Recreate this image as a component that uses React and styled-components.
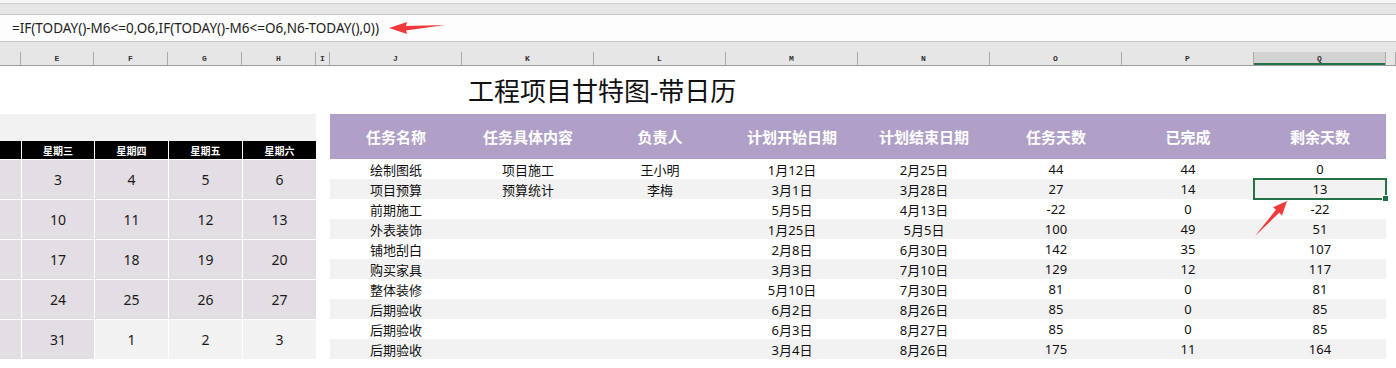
import styled, { createGlobalStyle } from 'styled-components'

const GlobalStyle = createGlobalStyle`
  html, body {
    margin: 0;
    padding: 0;
    background: #ffffff;
  }
  body {
    font-family: "Noto Sans", "Noto Sans CJK SC", sans-serif;
  }
`

const Page = styled.div`
  width: 1396px;
  height: 368px;
  overflow: hidden;
  background: #ffffff;
  display: flex;
  flex-direction: column;
`

const TopStrip = styled.div`
  height: 3px;
  background: #f6f6f6;
  border-bottom: 1px solid #cfcfcf;
`

const GreyBand = styled.div`
  height: ${p => p.h}px;
  background: #e6e6e6;
`

const FormulaBar = styled.div`
  height: 26px;
  background: #fdfdfd;
  border-top: 1px solid #c6c6c6;
  border-bottom: 1px solid #c6c6c6;
  display: flex;
  align-items: center;
  padding-left: 12px;
  gap: 9px;
`

const Formula = styled.span`
  font-size: 13.5px;
  color: #222;
  white-space: nowrap;
`

const ColHeaderRow = styled.div`
  height: 13px;
  display: flex;
  background: #e6e6e6;
  border-bottom: 1px solid #9d9d9d;
`

const ColHead = styled.div`
  flex: 0 0 ${p => p.w}px;
  box-sizing: border-box;
  border-right: 1px solid #ababab;
  display: flex;
  align-items: center;
  justify-content: center;
  font-family: "Liberation Mono", monospace;
  font-size: 8px;
  font-weight: bold;
  color: #333;
  background: ${p => (p.active ? '#d2d2d2' : 'transparent')};
  box-shadow: ${p => (p.active ? 'inset 0 -2px 0 #217346' : 'none')};
`

const Sheet = styled.div`
  flex: 1;
  display: flex;
  align-items: flex-start;
`

const Calendar = styled.div`
  width: 316px;
  flex: 0 0 316px;
  overflow: hidden;
  display: flex;
  flex-direction: column;
  padding-top: 48px;
`

const CalTitle = styled.div`
  height: 27px;
  background: #f2f2f2;
`

const CalGrid = styled.div`
  margin-left: -52px;
  display: grid;
  grid-template-columns: 73px 72px 73px 73px 73px;
  grid-template-rows: 18px repeat(5, 39px);
  row-gap: 1px;
  column-gap: 1px;
  background: #ffffff;
`

const WeekDay = styled.div`
  background: #000000;
  color: #ffffff;
  font-size: 10px;
  font-weight: bold;
  display: flex;
  align-items: center;
  justify-content: center;
`

const Day = styled.div`
  background: ${p => (p.other ? '#f2f2f2' : '#e3dde4')};
  color: #1a1a1a;
  font-size: 14px;
  display: flex;
  align-items: center;
  justify-content: center;
`

const Spacer = styled.div`
  flex: 0 0 14px;
`

const Project = styled.div`
  position: relative;
  flex: 0 0 1056px;
  display: flex;
  flex-direction: column;
`

const Title = styled.h1`
  margin: 0;
  height: 48px;
  padding-left: 138px;
  display: flex;
  align-items: center;
  font-size: 26px;
  font-weight: normal;
  color: #111;
`

const Table = styled.div`
  display: grid;
  grid-template-columns: repeat(8, 132px);
`

const Th = styled.div`
  height: 45px;
  background: #b0a0c8;
  color: #ffffff;
  font-size: 15px;
  font-weight: bold;
  display: flex;
  align-items: center;
  justify-content: center;
`

const Td = styled.div`
  position: relative;
  height: 20px;
  background: ${p => (p.odd ? '#f2f2f2' : '#ffffff')};
  color: #111;
  font-size: 13px;
  display: flex;
  align-items: center;
  justify-content: center;
  outline: ${p => (p.selected ? '2px solid #217346' : 'none')};
  outline-offset: -1px;
  z-index: ${p => (p.selected ? 1 : 0)};

  ${p => p.selected && `
    &::after {
      content: '';
      position: absolute;
      right: -3px;
      bottom: -3px;
      width: 5px;
      height: 5px;
      background: #217346;
      border: 1px solid #ffffff;
    }
  `}
`

const PointerArrow = styled.svg`
  position: absolute;
  left: 922px;
  top: 133px;
  z-index: 2;
`

const columns = [
  { name: '', w: 21 },
  { name: 'E', w: 73 },
  { name: 'F', w: 74 },
  { name: 'G', w: 74 },
  { name: 'H', w: 74 },
  { name: 'I', w: 14 },
  { name: 'J', w: 132 },
  { name: 'K', w: 132 },
  { name: 'L', w: 132 },
  { name: 'M', w: 132 },
  { name: 'N', w: 132 },
  { name: 'O', w: 132 },
  { name: 'P', w: 132 },
  { name: 'Q', w: 132, active: true },
  { name: '', w: 10 },
]

// the first column (星期二) is scrolled out of view, only its edge shows
const weekDays = ['', '星期三', '星期四', '星期五', '星期六']

const weeks = [
  ['', 3, 4, 5, 6],
  ['', 10, 11, 12, 13],
  ['', 17, 18, 19, 20],
  ['', 24, 25, 26, 27],
  ['', 31, 1, 2, 3],
]

const headers = ['任务名称', '任务具体内容', '负责人', '计划开始日期', '计划结束日期', '任务天数', '已完成', '剩余天数']

const tasks = [
  ['绘制图纸', '项目施工', '王小明', '1月12日', '2月25日', 44, 44, 0],
  ['项目预算', '预算统计', '李梅', '3月1日', '3月28日', 27, 14, 13],
  ['前期施工', '', '', '5月5日', '4月13日', -22, 0, -22],
  ['外表装饰', '', '', '1月25日', '5月5日', 100, 49, 51],
  ['铺地刮白', '', '', '2月8日', '6月30日', 142, 35, 107],
  ['购买家具', '', '', '3月3日', '7月10日', 129, 12, 117],
  ['整体装修', '', '', '5月10日', '7月30日', 81, 0, 81],
  ['后期验收', '', '', '6月2日', '8月26日', 85, 0, 85],
  ['后期验收', '', '', '6月3日', '8月27日', 85, 0, 85],
  ['后期验收', '', '', '3月4日', '8月26日', 175, 11, 164],
]

function LeftArrow() {
  return (
    <svg width="58" height="14" viewBox="0 0 58 14">
      <polygon points="1,7 19,1 18,5 57,4 18,9.5 19,13" fill="#f0393a" />
    </svg>
  )
}

function App() {
  return (
    <Page>
      <GlobalStyle />
      <TopStrip />
      <GreyBand h={10} />
      <FormulaBar>
        <Formula>=IF(TODAY()-M6&lt;=0,O6,IF(TODAY()-M6&lt;=O6,N6-TODAY(),0))</Formula>
        <LeftArrow />
      </FormulaBar>
      <GreyBand h={10} />
      <ColHeaderRow>
        {columns.map((c, i) => (
          <ColHead key={i} w={c.w} active={c.active}>{c.name}</ColHead>
        ))}
      </ColHeaderRow>
      <Sheet>
        <Calendar>
          <CalTitle />
          <CalGrid>
            {weekDays.map((d, i) => <WeekDay key={i}>{d}</WeekDay>)}
            {weeks.map((week, r) =>
              week.map((n, c) => (
                <Day key={`${r}-${c}`} other={r === 4 && c > 1}>{n}</Day>
              ))
            )}
          </CalGrid>
        </Calendar>
        <Spacer />
        <Project>
          <Title>工程项目甘特图-带日历</Title>
          <Table>
            {headers.map(h => <Th key={h}>{h}</Th>)}
            {tasks.map((row, r) =>
              row.map((v, c) => (
                <Td key={`${r}-${c}`} odd={r % 2 === 1} selected={r === 1 && c === 7}>{v}</Td>
              ))
            )}
          </Table>
          <PointerArrow width="40" height="40" viewBox="0 0 40 40">
            <polygon points="35,2 30,16.4 27.2,13.8 3,37 23.9,10.8 21.1,8.2" fill="#f0393a" />
          </PointerArrow>
        </Project>
      </Sheet>
    </Page>
  )
}

export default App
